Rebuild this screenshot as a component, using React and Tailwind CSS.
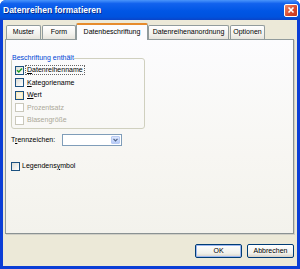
import React from "react";

const font = { fontFamily: '"Liberation Sans", Arial, sans-serif' };

function Check({ checked, hover, disabled }) {
  const base = "w-[9px] h-[9px] shrink-0 border flex items-center justify-center";
  if (disabled)
    return <div className={`${base} border-[#cac8bb] bg-white`} />;
  if (hover)
    return (
      <div className={`${base} border-[#1c5180] bg-[#fbe9b0]`}>
        <div className="w-[5px] h-[5px] bg-[#f6f3e4]" />
      </div>
    );
  return (
    <div className={`${base} border-[#1c5180] bg-[linear-gradient(135deg,#dcdcd5,#ffffff)]`}>
      {checked && (
        <svg width="7" height="7" viewBox="0 0 7 7">
          <path d="M1 3.2 L2.8 5 L6 1.5" stroke="#21a121" strokeWidth="1.5" fill="none" />
        </svg>
      )}
    </div>
  );
}

function Tab({ label, active, w }) {
  if (active)
    return (
      <div
        className={`${w} relative z-10 -mb-px h-[17px] bg-[#fcfcfe] border border-b-0 border-[#919b9c] border-t-[#e68b2c] border-t-2 rounded-t-[2px] flex items-center justify-center text-[7px] text-black`}
      >
        {label}
      </div>
    );
  return (
    <div
      className={`${w} h-[14px] bg-[linear-gradient(to_bottom,#ffffff,#f3f2ee_60%,#e6e4dc)] border border-b-0 border-[#919b9c] rounded-t-[2px] flex items-center justify-center text-[7px] text-black`}
    >
      {label}
    </div>
  );
}

function Row({ children, label, disabled, focus }) {
  return (
    <div className="h-[12.5px] flex items-center gap-[1px]">
      {children}
      <span
        className={`text-[7px] leading-[8px] px-[1px] border border-dotted ${focus ? "border-[#666]" : "border-transparent"} ${disabled ? "text-[#aca899]" : "text-black"}`}
      >
        {label}
      </span>
    </div>
  );
}

export default function App() {
  return (
    <div style={font} className="w-[300px] h-[269px] bg-[#0b3ed6] rounded-t-[6px] flex flex-col overflow-hidden">
      {/* Title bar */}
      <div className="h-[20px] shrink-0 bg-[linear-gradient(to_bottom,#4a95fb_0%,#1262ee_18%,#0056e5_55%,#0052de_85%,#0a44c8_100%)] flex items-center pl-[3px] pr-[2px]">
        <span className="text-white font-bold text-[8.5px] flex-1 [text-shadow:1px_1px_0_#0a2a8c]">
          Datenreihen formatieren
        </span>
        <div className="w-[14px] h-[13px] rounded-[2px] border border-white bg-[linear-gradient(135deg,#f08a6a,#d6462a_60%,#c23a20)] flex items-center justify-center">
          <svg width="8" height="8" viewBox="0 0 8 8">
            <path d="M1.5 1.5 L6.5 6.5 M6.5 1.5 L1.5 6.5" stroke="white" strokeWidth="1.6" />
          </svg>
        </div>
      </div>

      {/* Body */}
      <div className="flex-1 mx-[3px] mb-[3px] bg-[#ece9d8] flex flex-col pt-[3px] pl-[2px] pr-[3px]">
        {/* Tabs */}
        <div className="flex items-end pl-[1px] h-[16px]">
          <Tab label="Muster" w="w-[35px]" />
          <div className="w-[1px]" />
          <Tab label="Form" w="w-[34px]" />
          <Tab label="Datenbeschriftung" w="w-[72px]" active />
          <Tab label="Datenreihenanordnung" w="w-[81px]" />
          <div className="w-[1px]" />
          <Tab label="Optionen" w="w-[35px]" />
        </div>

        {/* Panel */}
        <div className="h-[195px] border border-[#919b9c] border-r-[#8a9293] border-b-[#8a9293] shadow-[1px_1px_0_#d0cfc6] bg-[linear-gradient(to_bottom,#fcfcfe,#f7f6f2_60%,#f3f2ec)] pl-[5px] pt-[14px] flex flex-col">
          <fieldset className="w-[134px] h-[75px] border border-[#d0d0bf] rounded-[3px] px-[3px]">
            <legend className="text-[7px] leading-[8px] text-[#0046d5] px-0 ml-[-3px]">Beschriftung enthält</legend>
            <div className="flex flex-col pt-[2px]">
              <Row label={<><u>D</u>atenreihenname</>} focus>
                <Check checked />
              </Row>
              <Row label={<><u>K</u>ategoriename</>}>
                <Check />
              </Row>
              <Row label={<><u>W</u>ert</>}>
                <Check hover />
              </Row>
              <Row label="Prozentsatz" disabled>
                <Check disabled />
              </Row>
              <Row label="Blasengröße" disabled>
                <Check disabled />
              </Row>
            </div>
          </fieldset>

          <div className="flex items-center mt-[5px] h-[12px]">
            <span className="text-[7px] text-black w-[51px]">
              T<u>r</u>ennzeichen:
            </span>
            <div className="w-[60px] h-[12px] border border-[#7f9db9] bg-white flex justify-end p-[1px]">
              <div className="w-[9px] h-full rounded-[1px] bg-[linear-gradient(to_bottom,#dce6fd,#b7cbf8)] border border-[#b9cbf3] flex items-center justify-center">
                <svg width="5" height="4" viewBox="0 0 5 4">
                  <path d="M0.5 0.8 L2.5 2.8 L4.5 0.8" stroke="#4d6185" strokeWidth="1.2" fill="none" />
                </svg>
              </div>
            </div>
          </div>

          <div className="flex items-center gap-[2px] mt-[15px] h-[10px]">
            <Check />
            <span className="text-[7px] text-black">
              Legendens<u>y</u>mbol
            </span>
          </div>
        </div>

        {/* Buttons */}
        <div className="flex justify-end gap-[5px] mt-[10px]">
          <div className="w-[47px] h-[14px] rounded-[2px] border border-[#003c74] bg-[linear-gradient(to_bottom,#ffffff,#f0f0ea_70%,#d6d0c5)] shadow-[inset_0_0_0_1px_#9cb7f0] flex items-center justify-center text-[7px] text-black">
            OK
          </div>
          <div className="w-[47px] h-[14px] rounded-[2px] border border-[#003c74] bg-[linear-gradient(to_bottom,#ffffff,#f0f0ea_70%,#d6d0c5)] flex items-center justify-center text-[7px] text-black">
            Abbrechen
          </div>
        </div>
      </div>
    </div>
  );
}
